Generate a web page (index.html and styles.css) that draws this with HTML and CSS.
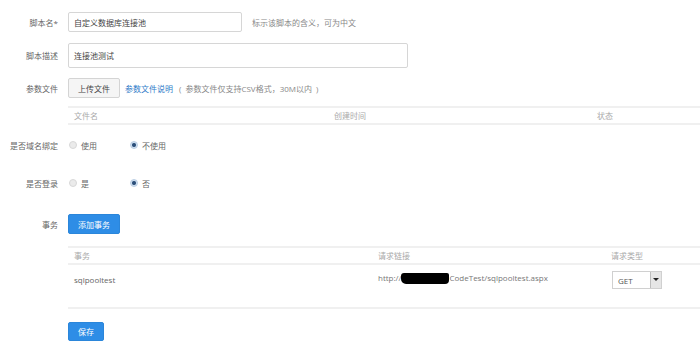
FILE: index.html
```html
<!DOCTYPE html>
<html lang="zh-CN">
<head>
    <meta charset="UTF-8">
    <title>脚本编辑</title>
    <link rel="stylesheet" href="styles.css">
</head>
<body>
    <div class="form">
        <!-- 脚本名 -->
        <div class="row row-name">
            <label class="label">脚本名*</label>
            <div class="input input-short">自定义数据库连接池</div>
            <span class="hint">标示该脚本的含义，可为中文</span>
        </div>

        <div class="row row-desc">
            <label class="label">脚本描述</label>
            <div class="input input-long">连接池测试</div>
        </div>

        <div class="row row-file">
            <label class="label">参数文件</label>
            <button class="btn btn-default">上传文件</button>
            <a class="link">参数文件说明</a>
            <span class="note">( 参数文件仅支持CSV格式，30M以内 )</span>
        </div>

        <div class="table file-table">
            <div class="thead">
                <div class="cell c-name">文件名</div>
                <div class="cell c-time">创建时间</div>
                <div class="cell c-state">状态</div>
            </div>
        </div>

        <div class="row row-radio row-domain">
            <label class="label">是否域名绑定</label>
            <span class="radio"><i class="dot"></i>使用</span>
            <span class="radio"><i class="dot checked"></i>不使用</span>
        </div>

        <div class="row row-radio row-login">
            <label class="label">是否登录</label>
            <span class="radio"><i class="dot"></i>是</span>
            <span class="radio"><i class="dot checked"></i>否</span>
        </div>

        <div class="row row-task">
            <label class="label">事务</label>
            <button class="btn btn-primary">添加事务</button>
        </div>

        <div class="table task-table">
            <div class="thead">
                <div class="cell t-name">事务</div>
                <div class="cell t-url">请求链接</div>
                <div class="cell t-type">请求类型</div>
            </div>
            <div class="tbody">
                <div class="cell t-name strong">sqlpooltest</div>
                <div class="cell t-url url">http://<span class="mask"></span>CodeTest/sqlpooltest.aspx</div>
                <div class="cell t-type">
                    <div class="select">
                        <span class="select-val">GET</span>
                        <span class="select-arrow"></span>
                    </div>
                </div>
            </div>
        </div>

        <div class="save-row">
            <button class="btn btn-primary btn-save">保存</button>
        </div>
    </div>
</body>
</html>
```

FILE: styles.css
```css
* {
    box-sizing: border-box;
    margin: 0;
    padding: 0;
}

body {
    font-family: 'Open Sans', 'Noto Sans CJK SC', sans-serif;
    font-size: 8px;
    color: #666;
    background: #fff;
    overflow: hidden;
}

.form {
    padding-top: 12px;
    width: 700px;
}

.row {
    display: flex;
    align-items: center;
}

.label {
    width: 58px;
    margin-right: 10px;
    text-align: right;
    color: #666;
    flex-shrink: 0;
}

.input {
    border: 1px solid #d6d6d6;
    border-radius: 2px;
    padding: 0 5px;
    color: #444;
    display: flex;
    align-items: center;
}

.input-short {
    width: 174px;
    height: 20px;
}

.input-long {
    width: 340px;
    height: 25px;
}

.hint {
    margin-left: 10px;
    color: #888;
}

.row-name {
    margin-bottom: 11px;
}

.row-desc {
    margin-bottom: 10px;
}

.row-file {
    margin-bottom: 8px;
}

.btn {
    font-family: inherit;
    font-size: 8px;
    height: 20px;
    border-radius: 2px;
    cursor: pointer;
}

.btn-default {
    width: 52px;
    background: #f5f5f5;
    border: 1px solid #d4d4d4;
    color: #444;
}

.btn-primary {
    width: 52px;
    background: #2e8de6;
    border: 1px solid #2b86da;
    color: #fff;
}

.link {
    margin-left: 5px;
    color: #2f7bc8;
}

.note {
    margin-left: 6px;
    color: #888;
    word-spacing: 2px;
}

/* 表格 */
.table {
    margin-left: 68px;
    width: 632px;
}

.thead,
.tbody {
    display: flex;
}

.thead {
    height: 19px;
    align-items: center;
    border-top: 2px solid #f0f0f0;
    border-bottom: 2px solid #f0f0f0;
    color: #aaa;
}

.cell {
    padding-left: 6px;
}

.c-name { width: 260px; }
.c-time { width: 263px; }
.c-state { flex: 1; }

.file-table {
    margin-bottom: 10px;
}

.row-radio {
    height: 20px;
}

.row-domain {
    margin-bottom: 18px;
}

.row-login {
    margin-bottom: 21px;
}

.radio {
    display: inline-flex;
    align-items: center;
    width: 61px;
    color: #666;
}

.dot {
    width: 8px;
    height: 8px;
    border-radius: 50%;
    border: 1px solid #d8d8d8;
    background: #ebebeb;
    margin: 0 4px 0 1px;
}

.dot.checked {
    background: radial-gradient(circle, #2c4f7a 0, #2c4f7a 1.5px, #cfdff0 2.5px);
    border-color: #b9cde3;
}

.row-task {
    height: 20px;
    margin-bottom: 12px;
}

.task-table .t-name { width: 304px; }
.task-table .t-url { width: 233px; }
.task-table .t-type { flex: 1; }

.tbody {
    height: 44px;
    padding-top: 6px;
    border-bottom: 2px solid #f0f0f0;
}

.strong {
    color: #666;
    padding-top: 3px;
}

.url {
    color: #777;
    display: flex;
    align-items: flex-start;
    padding-top: 1px;
}

.mask {
    display: inline-block;
    width: 48px;
    height: 11px;
    margin-top: 1px;
    background: #000;
    border-radius: 3px 2px 4px 5px;
}

.select {
    margin-left: 1px;
    width: 50px;
    height: 18px;
    border: 1px solid #d0d0d0;
    display: flex;
    align-items: center;
    justify-content: space-between;
    background: #fff;
}

.select-val {
    padding-left: 5px;
    color: #555;
}

.select-arrow {
    width: 11px;
    height: 16px;
    background: #e6e6e6;
    border-left: 1px solid #bdbdbd;
    position: relative;
}

.select-arrow::after {
    content: '';
    position: absolute;
    left: 2px;
    top: 6px;
    border-left: 3px solid transparent;
    border-right: 3px solid transparent;
    border-top: 3px solid #222;
}

.save-row {
    margin-top: 13px;
    padding-left: 68px;
}

.btn-save {
    width: 36px;
    height: 19px;
}
```
